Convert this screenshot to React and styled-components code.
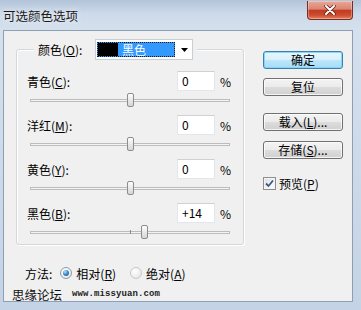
import React from "react";
import styled, { createGlobalStyle } from "styled-components";

const FONT = `"Noto Sans CJK SC", "Noto Sans", sans-serif`;

const GlobalStyle = createGlobalStyle`
  html, body {
    margin: 0;
    padding: 0;
    background: #fff;
  }
  body {
    overflow: hidden;
  }
`;

const Window = styled.div`
  width: 361px;
  height: 310px;
  box-sizing: border-box;
  display: flex;
  flex-direction: column;
  background: linear-gradient(180deg, #b3c4d9 0px, #cddaea 14px, #d5e0ed 30px, #c4d3e5 100%);
  font-family: ${FONT};
  font-size: 12px;
  color: #000;
`;

const TitleBar = styled.div`
  height: 30px;
  flex-shrink: 0;
  display: flex;
  align-items: flex-start;
  justify-content: space-between;
  padding: 0 8px 0 3px;
`;

const Title = styled.div`
  font-size: 12.5px;
  line-height: 14px;
  margin-top: 9px;
  color: #1b1b1b;
  text-shadow: 0 0 6px rgba(255, 255, 255, 0.9);
`;

const CloseButton = styled.div`
  width: 46px;
  height: 19px;
  margin-top: 1px;
  box-sizing: border-box;
  border: 1px solid #7a2d22;
  border-top: none;
  border-radius: 0 0 4px 4px;
  background: linear-gradient(180deg, #e8a899 0%, #db8470 45%, #c23b22 52%, #cc4b2f 78%, #e2825e 100%);
  box-shadow: inset 0 0 0 1px rgba(255, 255, 255, 0.3);
  display: flex;
  align-items: center;
  justify-content: center;
`;

const Client = styled.div`
  flex: 1;
  margin: 0 8px 8px 3px;
  border: 1px solid #8d9fb5;
  background: #f0f0f0;
  display: flex;
  flex-direction: column;
`;

const Main = styled.div`
  display: flex;
  align-items: flex-start;
  gap: 19px;
  padding: 18px 0 0 12px;
`;

const GroupBox = styled.div`
  width: 228px;
  box-sizing: border-box;
  border: 1px solid #d2d8de;
  border-radius: 3px;
  box-shadow: inset 1px 1px 0 #fff, 1px 1px 0 #fff;
  padding: 0 12px 5px 10px;
  display: flex;
  flex-direction: column;
`;

const Legend = styled.div`
  align-self: flex-start;
  height: 21px;
  margin: -11px 0 11px 7px;
  padding: 0 4px;
  background: #f0f0f0;
  display: flex;
  align-items: center;
`;

const LegendLabel = styled.span`
  width: 57px;
`;

const Dropdown = styled.div`
  width: 98px;
  height: 21px;
  box-sizing: border-box;
  border: 1px solid #c9ced4;
  background: #fff;
  padding: 0 0 0 1px;
  display: flex;
  align-items: center;
  justify-content: space-between;
`;

const Selected = styled.div`
  width: 78px;
  height: 15px;
  box-sizing: border-box;
  border: 1px dotted #1a1a1a;
  background: #3399ff;
  display: flex;
  align-items: stretch;
`;

const Swatch = styled.span`
  width: 20px;
  background: #000;
`;

const SelectedText = styled.span`
  color: #fff;
  margin-left: 4px;
  line-height: 13px;
`;

const ArrowBox = styled.span`
  width: 16px;
  display: flex;
  justify-content: center;
`;

const Fields = styled.div`
  display: flex;
  flex-direction: column;
  gap: 8px;
`;

const Field = styled.div`
  display: flex;
  flex-direction: column;
  gap: 2px;
`;

const FieldRow = styled.div`
  height: 20px;
  display: flex;
  align-items: center;
`;

const FieldLabel = styled.span`
  flex: 1;
`;

const NumberBox = styled.div`
  width: 38px;
  height: 20px;
  box-sizing: border-box;
  border: 1px solid #e3e7eb;
  border-top-color: #ccd1d6;
  background: #fff;
  padding-left: 4px;
  line-height: 18px;
`;

const Percent = styled.span`
  width: 11px;
  margin-left: 5px;
`;

const Slider = styled.div`
  position: relative;
  height: 14px;
  margin: 0 1px 0 3px;
  display: flex;
  align-items: center;
`;

const Groove = styled.div`
  flex: 1;
  height: 3px;
  box-sizing: border-box;
  border: 1px solid #bcbcbc;
  background: #f4f4f4;
`;

const CenterTick = styled.span`
  position: absolute;
  left: 50%;
  top: 5px;
  width: 1px;
  height: 4px;
  background: #8a8a8a;
`;

const Thumb = styled.span`
  position: absolute;
  top: 0;
  width: 7px;
  height: 14px;
  box-sizing: border-box;
  border: 1px solid #8d8d8d;
  border-radius: 2px;
  background: linear-gradient(180deg, #fdfdfd 0%, #e9e9e9 50%, #d6d6d6 100%);
`;

const ButtonColumn = styled.div`
  width: 80px;
  padding-top: 2px;
  display: flex;
  flex-direction: column;
`;

const Button = styled.div`
  width: 80px;
  height: 18px;
  margin-top: ${(p) => p.$gap || 0}px;
  box-sizing: border-box;
  border: 1px solid ${(p) => (p.$primary ? "#3c7fb1" : "#707070")};
  border-radius: 3px;
  background: ${(p) =>
    p.$primary
      ? "linear-gradient(180deg, #e9f6fd 0%, #d8f0fc 50%, #bde6fb 50%, #a8dcf6 100%)"
      : "linear-gradient(180deg, #f3f3f3 0%, #ebebeb 50%, #dddddd 50%, #d0d0d0 100%)"};
  box-shadow: inset 0 0 0 1px ${(p) => (p.$primary ? "rgba(120, 215, 245, 0.9)" : "rgba(255, 255, 255, 0.75)")};
  display: flex;
  align-items: center;
  justify-content: center;
  line-height: 16px;
`;

const CheckRow = styled.div`
  margin-top: 17px;
  height: 14px;
  display: flex;
  align-items: center;
`;

const CheckBox = styled.span`
  width: 13px;
  height: 13px;
  box-sizing: border-box;
  margin-right: 3px;
  border: 1px solid #8f8f8f;
  background: linear-gradient(135deg, #dcdcdc 0%, #f4f4f4 60%, #ffffff 100%);
  box-shadow: inset 0 0 0 1px #f4f4f4;
  display: flex;
  align-items: center;
  justify-content: center;
`;

const MethodRow = styled.div`
  height: 16px;
  margin-top: 20px;
  padding-left: 21px;
  display: flex;
  align-items: center;
`;

const Radio = styled.span`
  width: 12px;
  height: 12px;
  box-sizing: border-box;
  margin: 0 4px 0 ${(p) => p.$gap}px;
  border-radius: 50%;
  border: 1px solid ${(p) => (p.$on ? "#8e9aa6" : "#c4c9ce")};
  background: radial-gradient(circle at 35% 30%, #ffffff 0%, #f1f1f1 50%, #dedede 100%);
  display: flex;
  align-items: center;
  justify-content: center;
`;

const RadioDot = styled.span`
  width: 6px;
  height: 6px;
  border-radius: 50%;
  background: radial-gradient(circle at 35% 30%, #b7e6ff 0%, #3a8fcf 45%, #1a4f80 100%);
`;

const Watermark = styled.div`
  height: 14px;
  margin-top: 6px;
  padding-left: 8px;
  display: flex;
  align-items: center;
`;

const SiteName = styled.span`
  font-size: 12.5px;
  color: #111;
`;

const SiteUrl = styled.span`
  margin-left: 10px;
  font-family: "Liberation Mono", "DejaVu Sans Mono", monospace;
  font-size: 9px;
  font-weight: bold;
  color: #222;
  letter-spacing: 0.1px;
`;

const U = styled.span`
  text-decoration: underline;
  text-underline-offset: 1px;
`;

const fields = [
  { name: "青色", key: "C", value: 0 },
  { name: "洋红", key: "M", value: 0 },
  { name: "黄色", key: "Y", value: 0 },
  { name: "黑色", key: "B", value: 14 },
];

const fmt = (v) => (v > 0 ? `+${v}` : `${v}`);

const ColorField = ({ name, hotkey, value }) => (
  <Field>
    <FieldRow>
      <FieldLabel>
        {name}(<U>{hotkey}</U>):
      </FieldLabel>
      <NumberBox>{fmt(value)}</NumberBox>
      <Percent>%</Percent>
    </FieldRow>
    <Slider>
      <Groove />
      <CenterTick />
      <Thumb style={{ left: `calc(${50 + value / 2}% - 3px)` }} />
    </Slider>
  </Field>
);

export default function App() {
  return (
    <>
      <GlobalStyle />
      <Window>
        <TitleBar>
          <Title>可选颜色选项</Title>
          <CloseButton>
            <svg width="12" height="10" viewBox="0 0 12 10">
              <path d="M2 1 L10 9 M10 1 L2 9" stroke="#5a1a10" strokeWidth="3.4" strokeLinecap="round" />
              <path d="M2 1 L10 9 M10 1 L2 9" stroke="#fff" strokeWidth="2" strokeLinecap="round" />
            </svg>
          </CloseButton>
        </TitleBar>
        <Client>
          <Main>
            <GroupBox>
              <Legend>
                <LegendLabel>
                  颜色(<U>O</U>):
                </LegendLabel>
                <Dropdown>
                  <Selected>
                    <Swatch />
                    <SelectedText>黑色</SelectedText>
                  </Selected>
                  <ArrowBox>
                    <svg width="7" height="4" viewBox="0 0 7 4">
                      <path d="M0 0 H7 L3.5 4 Z" fill="#000" />
                    </svg>
                  </ArrowBox>
                </Dropdown>
              </Legend>
              <Fields>
                {fields.map((f) => (
                  <ColorField key={f.key} name={f.name} hotkey={f.key} value={f.value} />
                ))}
              </Fields>
            </GroupBox>
            <ButtonColumn>
              <Button $primary>确定</Button>
              <Button $gap={9}>复位</Button>
              <Button $gap={17}>
                载入(<U>L</U>)...
              </Button>
              <Button $gap={10}>
                存储(<U>S</U>)...
              </Button>
              <CheckRow>
                <CheckBox>
                  <svg width="9" height="9" viewBox="0 0 9 9">
                    <path d="M1 4.5 L3.5 7 L8 1.5" fill="none" stroke="#3b5a8a" strokeWidth="1.8" />
                  </svg>
                </CheckBox>
                <span>
                  预览(<U>P</U>)
                </span>
              </CheckRow>
            </ButtonColumn>
          </Main>
          <MethodRow>
            <span>方法:</span>
            <Radio $on $gap={8}>
              <RadioDot />
            </Radio>
            <span>
              相对(<U>R</U>)
            </span>
            <Radio $gap={14} />
            <span>
              绝对(<U>A</U>)
            </span>
          </MethodRow>
          <Watermark>
            <SiteName>思缘论坛</SiteName>
            <SiteUrl>www.missyuan.com</SiteUrl>
          </Watermark>
        </Client>
      </Window>
    </>
  );
}
